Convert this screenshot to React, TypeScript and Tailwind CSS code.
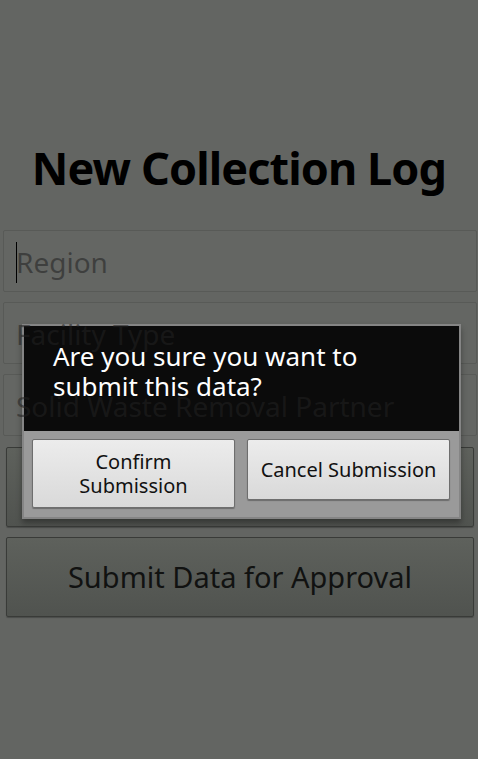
import React from "react";

const font = { fontFamily: '"Noto Sans", "Open Sans", "DejaVu Sans", sans-serif' };

function Field({ label, cursor }: { label: string; cursor?: boolean }) {
  return (
    <div className="h-[62px] border border-[#585a57] bg-[#646663] rounded-[2px] pl-[12px] pt-[13px] flex items-start">
      {cursor && <span className="w-px h-[41px] bg-black -mt-[2px] shrink-0" />}
      <span
        className={
          "relative z-20 text-[28px] leading-[36px] text-[rgba(34,34,34,0.57)] whitespace-nowrap " +
          (cursor ? "-ml-[1px]" : "ml-0")
        }
      >
        {label}
      </span>
    </div>
  );
}

function DarkButton({ label }: { label: string }) {
  return (
    <div className="h-[80px] ml-[6px] mr-[4px] border border-[#393b38] rounded-[2px] bg-gradient-to-b from-[#5e615c] to-[#50534f] flex items-center justify-center shadow-[0_1px_1px_rgba(0,0,0,0.25)]">
      <span className="text-[29px] leading-[36px] text-[#111211]">{label}</span>
    </div>
  );
}

export default function App() {
  return (
    <div style={font} className="relative w-[478px] h-[759px] bg-[#636562] overflow-hidden">
      <div className="pt-[142px] h-[194px] text-center">
        <h1 className="text-[45px] leading-[52px] font-bold text-black tracking-[-0.9px]">New Collection Log</h1>
      </div>
      <div className="mt-[36px] pl-[3px] pr-[1px] flex flex-col gap-[10px]">
        <Field label="Region" cursor />
        <Field label="Facility Type" />
        <Field label="Solid Waste Removal Partner" />
      </div>
      <div className="mt-[11px] flex flex-col gap-[10px]">
        <DarkButton label="" />
        <DarkButton label="Submit Data for Approval" />
      </div>

      {/* Dialog */}
      <div className="absolute z-10 left-[22px] top-[324px] w-[439px] h-[195px] border-2 border-[#858585] bg-[#9a9a9a] flex flex-col shadow-[0_4px_6px_rgba(0,0,0,0.35)]">
        <div className="bg-[#0b0b0b] h-[105px] pl-[29px] pt-[15px]">
          <p className="relative z-30 text-[26px] leading-[30px] text-white">
            Are you sure you want to
            <br />
            submit this data?
          </p>
        </div>
        <div className="flex items-start gap-[12px] pl-[8px] pr-[9px] pt-[8px]">
          <button className="w-[203px] h-[69px] rounded-[2px] border border-[#6e6e6e] bg-gradient-to-b from-[#ececec] to-[#d9d9d9] flex items-center justify-center shadow-[0_1px_1px_rgba(0,0,0,0.3)]">
            <span className="text-[20px] leading-[24px] text-[#111111] text-center">
              Confirm
              <br />
              Submission
            </span>
          </button>
          <button className="w-[203px] h-[61px] rounded-[2px] border border-[#6e6e6e] bg-gradient-to-b from-[#ececec] to-[#d9d9d9] flex items-center justify-center shadow-[0_1px_1px_rgba(0,0,0,0.3)]">
            <span className="text-[20px] leading-[24px] text-[#111111] whitespace-nowrap">Cancel Submission</span>
          </button>
        </div>
      </div>
    </div>
  );
}
